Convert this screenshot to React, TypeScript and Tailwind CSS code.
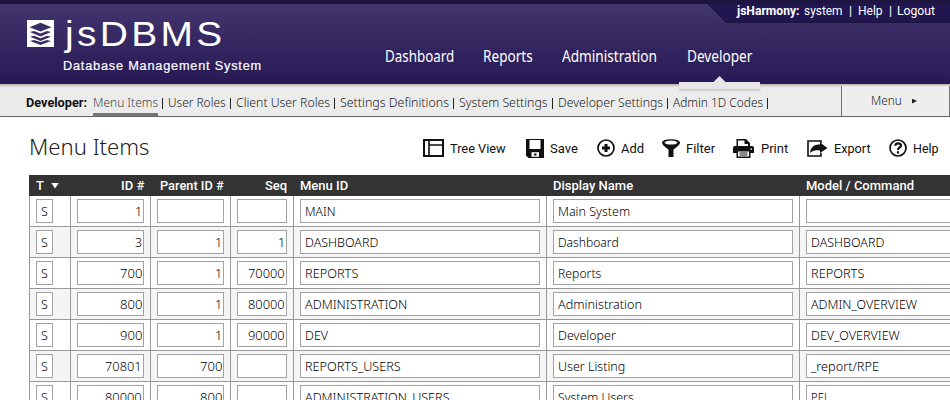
import { useLayoutEffect, useRef, useState } from "react";
import type { ReactNode } from "react";

const PT = "font-['Noto_Sans','Open_Sans',sans-serif]";
const RB = "font-['Roboto',sans-serif]";

// Condenses or expands a label so that it fills exactly the given width.
function Fit({ w, children, className = "" }: { w: number; children: ReactNode; className?: string }) {
  const ref = useRef<HTMLSpanElement>(null);
  const [scale, setScale] = useState(1);
  useLayoutEffect(() => {
    const measure = () => {
      if (ref.current && ref.current.offsetWidth) setScale(w / ref.current.offsetWidth);
    };
    measure();
    document.fonts?.ready.then(measure);
  }, [w]);
  return (
    <span className={`inline-block shrink-0 whitespace-nowrap text-left ${className}`} style={{ width: w }}>
      <span ref={ref} className="inline-block origin-left" style={{ transform: `scaleX(${scale})` }}>
        {children}
      </span>
    </span>
  );
}

const submenu: [string, number][] = [
  ["Menu Items", 65],
  ["User Roles", 58],
  ["Client User Roles", 94],
  ["Settings Definitions", 109],
  ["System Settings", 88.5],
  ["Developer Settings", 105],
  ["Admin 1D Codes", 90.5],
];

type Cell = [string, number] | null;
const rows: Cell[][] = [
  [["1", 7], null, null, ["MAIN", 31], ["Main System", 72], null],
  [["3", 7], ["1", 7], ["1", 7], ["DASHBOARD", 73], ["Dashboard", 61], ["DASHBOARD", 73]],
  [["700", 22], ["1", 7], ["70000", 37], ["REPORTS", 53], ["Reports", 43], ["REPORTS", 53]],
  [["800", 22], ["1", 7], ["80000", 37], ["ADMINISTRATION", 102], ["Administration", 84], ["ADMIN_OVERVIEW", 106]],
  [["900", 22], ["1", 7], ["90000", 37], ["DEV", 23], ["Developer", 58], ["DEV_OVERVIEW", 89]],
  [["70801", 37], ["700", 22], null, ["REPORTS_USERS", 96], ["User Listing", 67], ["_report/RPE", 68]],
  [["80000", 37], ["800", 22], null, ["ADMINISTRATION_USERS", 145], ["System Users", 76], ["PEL", 19]],
];

const COLS = "grid grid-cols-[41px_80px_80px_63px_253px_253px_253px]";

function Field({ cell, right = false, w }: { cell: Cell; right?: boolean; w: string }) {
  return (
    <div className="border-r border-[#999] pt-[3px] pl-[6px]">
      <div className={`flex h-6 items-center border border-[#a3a3a3] bg-white pt-[2px] leading-4 ${w} ${right ? "justify-end pr-px" : "pl-1"}`}>
        {cell && <Fit w={cell[1]}>{cell[0]}</Fit>}
      </div>
    </div>
  );
}

function Tool({ label, w, gap, children }: { label: string; w: number; gap: string; children: ReactNode }) {
  return (
    <div className={`flex h-6 items-center ${gap}`}>
      {children}
      <Fit w={w} className="pt-px">{label}</Fit>
    </div>
  );
}

export default function App() {
  return (
    <div className={`h-[400px] w-[950px] overflow-hidden bg-white text-[#222] ${PT}`}>
      <header className="relative h-[84px] bg-linear-to-b from-[#44366d] to-[#271955]">
        <div className="h-1 bg-[#1d1440]" />
        <svg className="absolute top-0 right-0" width="243" height="24" viewBox="0 0 243 24">
          <path d="M0 3H243V23H19Z" fill="#211650" />
          <path d="M0 3L19.5 22.5H243" fill="none" stroke="#1b123d" />
          <path d="M0 0H243V4H1Z" fill="#1d1440" />
        </svg>
        <div className={`absolute top-[3px] left-[737px] flex h-4 items-center text-[12.5px] text-white ${RB}`}>
          <Fit w={62} className="font-bold">jsHarmony:</Fit>
          <Fit w={39} className="ml-[5px]">system</Fit>
          <Fit w={3} className="ml-[6px]">|</Fit>
          <Fit w={25} className="ml-[6px]">Help</Fit>
          <Fit w={3} className="ml-[6px]">|</Fit>
          <Fit w={38} className="ml-[5px]">Logout</Fit>
        </div>
        <div className="flex">
          <div className="ml-[27px] mt-4">
            <svg width="27" height="27" viewBox="0 0 27 27">
              <path fill="#fff" d="M0 0h27v27H0z" />
              <g fill="#3a2c64">
                <path d="M13.5 2.8L24.5 7.2 13.5 11.4 2.5 7.2Z" />
                <path d="M3 12L7 11l6.500 2.500L20 11l4 1-10.500 4.500Z" />
                <path d="M3 16.800L7 15.800l6.500 2.500L20 15.800l4 1-10.500 4.300Z" />
                <path d="M3 21L7 20l6.500 2L20 20l4 1-10.500 4Z" />
              </g>
            </svg>
          </div>
          <div className="ml-[9px] mt-[10px] w-[220px] font-['Liberation_Sans',sans-serif] text-white">
            <Fit w={160} className="ml-[2px] h-[40px] text-[35px] leading-[40px] tracking-[3px]">jsDBMS</Fit>
            <div className="mt-1 h-4 text-[12.5px] leading-4 tracking-[0.8px]">
              <Fit w={199} className="[-webkit-text-stroke:0.2px_white]">Database Management System</Fit>
            </div>
          </div>
          <nav className="mt-[41px] ml-[102px] flex h-6 items-center text-[15.5px] text-white">
            <Fit w={69}>Dashboard</Fit>
            <Fit w={50} className="ml-[29px]">Reports</Fit>
            <Fit w={95} className="ml-[29px]">Administration</Fit>
            <Fit w={65} className="ml-[30px]">Developer</Fit>
          </nav>
        </div>
        <div className="absolute top-[76px] left-[679px] z-10 flex w-[81px] flex-col items-center">
          <div className="h-[6px] w-3 bg-[#e6e6e6] [clip-path:polygon(50%_0,100%_100%,0_100%)]" />
          <div className="h-[7px] w-full bg-[#e6e6e6] shadow-[0_2px_2px_#ccc]" />
        </div>
      </header>

      <div className="flex h-[33px] border-b border-[#666] bg-[repeating-linear-gradient(135deg,#f0f0f0_0px,#f0f0f0_1.4px,#e8e8e8_1.4px,#e8e8e8_2.83px)] text-[12.5px] font-[360] shadow-[inset_0_3px_2px_-1px_#bbb]">
        <div className="flex w-[841px] pl-[26px]">
          <Fit w={61} className={`pt-[9px] leading-[19px] font-bold text-[#111] ${RB}`}>Developer:</Fit>
          {submenu.map(([label, w], i) => (
            <div key={label} className="flex">
              <div className={`h-[32px] pt-[9px] leading-[19px] ${i === 0 ? "ml-[6px] border-b-[3px] border-[#777] text-[#444]" : "ml-[5px]"}`}>
                <Fit w={w}>{label}</Fit>
              </div>
              <div className="mt-[14px] ml-[4px] h-[11px] w-px bg-[#222]" />
            </div>
          ))}
        </div>
        <div className="mt-[2px] flex w-[109px] items-center border-x border-[#777] bg-[#eee] pl-[29px]">
          <Fit w={31} className="pt-px">Menu</Fit>
          <div className="ml-[10px] h-[5px] w-[5px] bg-[#222] [clip-path:polygon(0_0,100%_50%,0_100%)]" />
        </div>
      </div>

      <div className="flex h-[58px] pl-[29px]">
        <div className="mt-[14px] h-8 w-[394px] text-[22.5px] leading-8 font-[360]">
          <Fit w={120}>Menu Items</Fit>
        </div>
        <div className={`mt-[19px] flex text-[13px] text-[#111] ${RB}`}>
          <Tool label="Tree View" w={56} gap="gap-[6px]">
            <svg width="21" height="18" viewBox="0 0 21 18" fill="none" stroke="#111"><path strokeWidth="2" d="M1 1h19v16H1z" /><path strokeWidth="1.600" d="M6 1v16M6 6H20" /></svg>
          </Tool>
          <div className="w-[20px]" />
          <Tool label="Save" w={28} gap="gap-[6px]">
            <svg width="18" height="19" viewBox="0 0 18 19"><path fill="#111" d="M0 0h18v19H2.500L0 16.500Z" /><path fill="#fff" d="M3.500 1h11v9h-11z" /><path fill="#fff" d="M5.500 13.200h7.500v4.600H5.500z" /><path fill="#111" d="M8 14.500h2.500v2H8z" /></svg>
          </Tool>
          <div className="w-[19px]" />
          <Tool label="Add" w={23} gap="gap-[6px]">
            <svg width="18" height="18" viewBox="0 0 18 18" fill="none" stroke="#111"><circle cx="9" cy="9" r="8" strokeWidth="1.700" /><path strokeWidth="3" d="M5 9h8M9 5v8" /></svg>
          </Tool>
          <div className="w-[18px]" />
          <Tool label="Filter" w={29} gap="gap-[6px]">
            <svg width="18" height="18" viewBox="0 0 18 18"><path fill="#111" d="M0 3.500C0-1 18-1 18 3.500c0 2-2.500 4-6.500 7V18h-5v-7.500C2.500 7.500 0 5.500 0 3.500" /><ellipse cx="9" cy="3.600" rx="6.500" ry="2" fill="#fff" /></svg>
          </Tool>
          <div className="w-[18px]" />
          <Tool label="Print" w={27} gap="gap-[7px]">
            <svg width="21" height="19" viewBox="0 0 21 19"><path fill="#111" d="M0 9q0-2 2-2h1.500V0H13l4 4v3h2q2 0 2 2v5h-3.500v5h-14v-5H0Z" /><path fill="#fff" d="M5 1.500h6.500V5H15v2H5zM5 12.500h11v5H5z" /><path stroke="#111" strokeWidth="1.200" d="M6.500 14h8M6.500 16h8" /><path fill="#fff" d="M17.500 9.500H19v1.300h-1.500z" /></svg>
          </Tool>
          <div className="w-[19px]" />
          <Tool label="Export" w={37} gap="gap-[6px]">
            <svg width="21" height="17" viewBox="0 0 21 17"><path fill="none" stroke="#111" strokeWidth="1.600" d="M14 3V1H1v15h13v-3" /><path fill="#111" d="M3 13c.5-6 4-8.500 10-8.500V2.500l7.500 5.500-7.500 5V10.500c-5-.8-7 0-10 2.500" /></svg>
          </Tool>
          <div className="w-[18px]" />
          <Tool label="Help" w={26} gap="gap-[6px]">
            <svg width="18" height="18" viewBox="0 0 18 18" fill="none" stroke="#111"><circle cx="9" cy="9" r="8" strokeWidth="1.700" /><path strokeWidth="2.200" d="M6.300 6.800C6.300 3.500 12 3.500 12 6.800 12 8.500 9 8.500 9 11M9 12.300v2.200" /></svg>
          </Tool>
        </div>
      </div>

      <div className="ml-[29px] w-[1024px] text-[12.5px] font-[360] text-black">
        <div className={`${COLS} h-[21px] items-center border-l border-[#333] bg-[#333] text-[13px] font-medium text-white ${RB}`}>
          <div className="flex items-center pl-[6px]"><Fit w={8}>T</Fit><div className="ml-[7px] h-[6px] w-[8px] bg-white [clip-path:polygon(0_0,100%_0,50%_100%)]" /></div>
          <div className="flex justify-end pr-[7px]"><Fit w={23}>ID #</Fit></div>
          <div className="flex justify-end pr-[7px]"><Fit w={64}>Parent ID #</Fit></div>
          <div className="flex justify-end pr-[7px]"><Fit w={22}>Seq</Fit></div>
          <div className="pl-[6px]"><Fit w={48}>Menu ID</Fit></div>
          <div className="pl-[6px]"><Fit w={80}>Display Name</Fit></div>
          <div className="pl-[6px]"><Fit w={108}>Model / Command</Fit></div>
        </div>
        {rows.map((r, i) => (
          <div key={i} className={`${COLS} h-[31px] border-b border-l border-[#999] ${i % 2 ? "bg-[#f5f5f5]" : "bg-white"}`}>
            <Field cell={["S", 7]} w="w-[17px]" />
            <Field cell={r[0]} w="w-[67px]" right />
            <Field cell={r[1]} w="w-[67px]" right />
            <Field cell={r[2]} w="w-[50px]" right />
            <Field cell={r[3]} w="w-[240px]" />
            <Field cell={r[4]} w="w-[240px]" />
            <Field cell={r[5]} w="w-[240px]" />
          </div>
        ))}
      </div>
    </div>
  );
}
